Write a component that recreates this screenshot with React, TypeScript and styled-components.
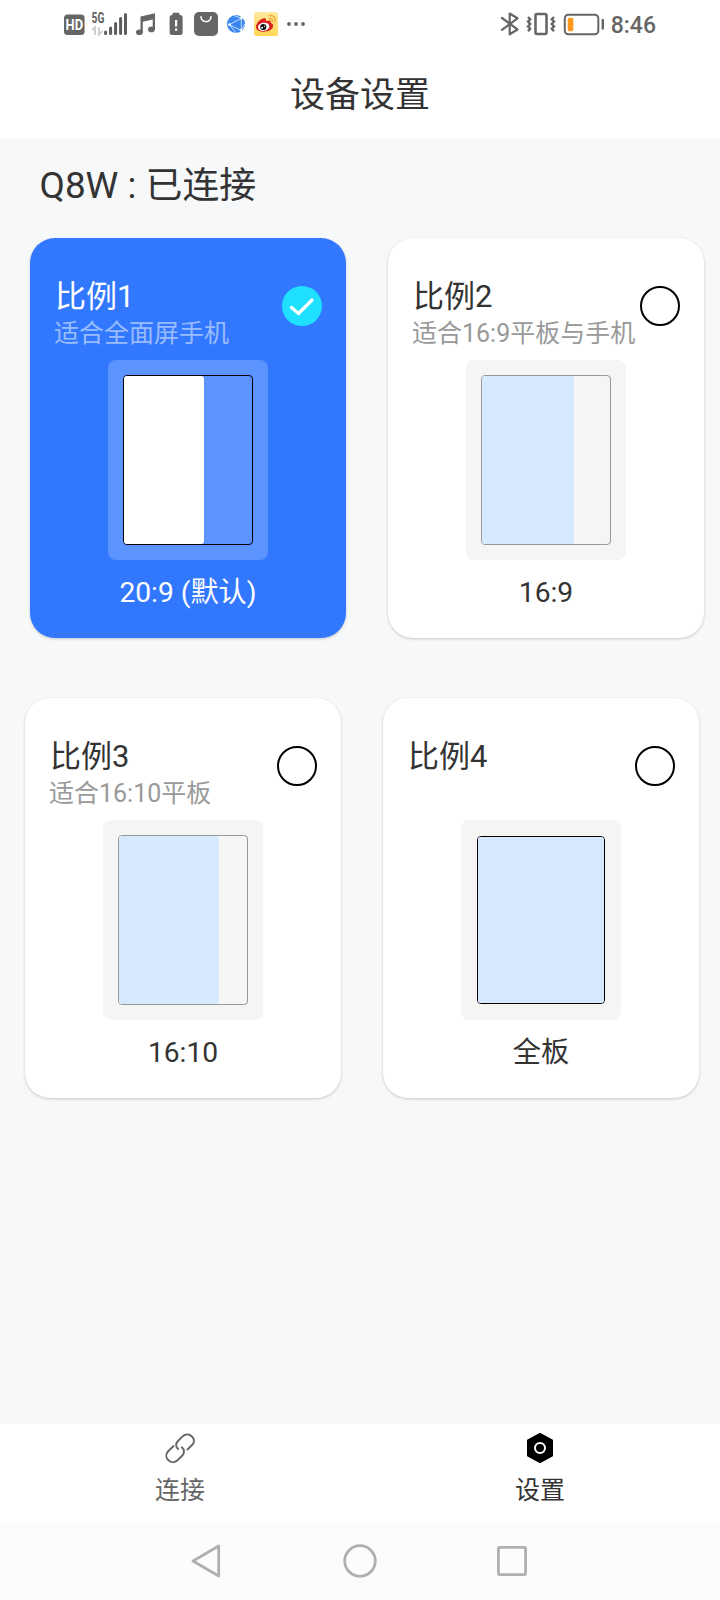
import React from "react";
import styled, { createGlobalStyle } from "styled-components";

const GlobalStyle = createGlobalStyle`
  * { box-sizing: border-box; }
  body {
    margin: 0;
    background: #f6f8fa;
    color: #333;
    font-family: Roboto, "Noto Sans CJK SC", sans-serif;
  }
`;

const Screen = styled.div`
  width: 720px;
  height: 1600px;
  display: flex;
  flex-direction: column;
  background: #f6f8fa;
`;

const StatusBar = styled.div`
  height: 48px;
  flex: none;
  display: flex;
  justify-content: space-between;
  padding: 0 64px 0 60px;
  background: #fff;
`;

const StatusGroup = styled.div`
  display: flex;
  align-items: center;
  height: 48px;
`;

const Clock = styled.span`
  font-size: 23px;
  font-weight: 500;
  line-height: 48px;
  padding-top: 4px;
  color: #666;
`;

const Header = styled.header`
  height: 90px;
  flex: none;
  background: #fff;
  text-align: center;
  font-size: 35px;
  line-height: 96px;
`;

const Content = styled.main`
  flex: 1;
`;

const DeviceState = styled.div`
  height: 100px;
  padding-left: 39.5px;
  font-size: 36.9px;
  line-height: 95px;
`;

const CardRow = styled.div<{ $indent: number }>`
  display: flex;
  gap: 42px;
  padding-left: ${(p) => p.$indent}px;
  margin-bottom: 60px;
`;

const Card = styled.section<{ $active: boolean }>`
  width: 316px;
  height: 400px;
  flex: none;
  display: flex;
  flex-direction: column;
  align-items: center;
  border-radius: 25px;
  padding: 40px 24px 0;
  background: ${(p) => (p.$active ? "#3278ff" : "#fff")};
  color: ${(p) => (p.$active ? "#fff" : "#333")};
  box-shadow: 0 1px 3px rgba(0, 0, 0, 0.2);
`;

const CardHead = styled.div`
  width: 100%;
  height: 82px;
  display: flex;
  justify-content: space-between;
  white-space: nowrap;
`;

const Labels = styled.div`
  width: 228px;
`;

const Title = styled.div`
  font-size: 31px;
  line-height: 38px;
  padding: 0 0 2px 1px;
`;

const Hint = styled.div<{ $active: boolean }>`
  font-size: 25px;
  line-height: 31px;
  color: ${(p) => (p.$active ? "#99bcff" : "#999")};
`;

const Radio = styled.div<{ $active: boolean }>`
  width: 40px;
  height: 40px;
  flex: none;
  margin-top: 8px;
  border-radius: 50%;
  border: ${(p) => (p.$active ? "none" : "2px solid #000")};
  background: ${(p) => (p.$active ? "#1fe0ff" : "transparent")};
`;

const Preview = styled.div<{ $active: boolean }>`
  width: 160px;
  height: 200px;
  flex: none;
  display: flex;
  align-items: center;
  justify-content: center;
  border-radius: 8px;
  background: ${(p) => (p.$active ? "#5b93ff" : "#f5f5f5")};
`;

const Board = styled.div<{ $full: boolean; $line: string }>`
  width: ${(p) => (p.$full ? 128 : 130)}px;
  height: ${(p) => (p.$full ? 168 : 170)}px;
  border: 1px solid ${(p) => p.$line};
  border-radius: 4px;
`;

const Area = styled.div<{ $w: number; $active: boolean }>`
  width: ${(p) => p.$w}px;
  height: 100%;
  border-radius: 3px;
  background: ${(p) => (p.$active ? "#fff" : "#d7e9ff")};
`;

const Caption = styled.div`
  font-size: 28.2px;
  line-height: 36px;
  margin-top: 15px;
`;

const TabBar = styled.nav`
  height: 98px;
  flex: none;
  display: flex;
  background: #fff;
`;

const Tab = styled.div<{ $color: string }>`
  flex: 1;
  display: flex;
  flex-direction: column;
  align-items: center;
  padding-top: 8px;
  font-size: 25px;
  line-height: 32px;
  color: ${(p) => p.$color};

  svg {
    margin-bottom: 11px;
  }
`;

const SystemNav = styled.div`
  height: 78px;
  flex: none;
  background: #fcfcfc;
  svg {
    display: block;
  }
`;

interface Ratio {
  title: string;
  hint: string;
  caption: string;
  area: number;
  line: string;
  active?: boolean;
  full?: boolean;
}

const rows: { indent: number; items: Ratio[] }[] = [
  {
    indent: 30,
    items: [
      { title: "比例1", hint: "适合全面屏手机", caption: "20:9 (默认)", area: 80, line: "#000", active: true },
      { title: "比例2", hint: "适合16:9平板与手机", caption: "16:9", area: 92, line: "#999" },
    ],
  },
  {
    indent: 25,
    items: [
      { title: "比例3", hint: "适合16:10平板", caption: "16:10", area: 100, line: "#999" },
      { title: "比例4", hint: "", caption: "全板", area: 126, line: "#000", full: true },
    ],
  },
];

function RatioCard({ title, hint, caption, area, line, active = false, full = false }: Ratio) {
  return (
    <Card $active={active}>
      <CardHead>
        <Labels>
          <Title>{title}</Title>
          <Hint $active={active}>{hint}</Hint>
        </Labels>
        <Radio $active={active}>
          {active && (
            <svg width="40" height="40" viewBox="0 0 40 40" fill="none" stroke="#fff" strokeWidth="3.2" strokeLinecap="round" strokeLinejoin="round">
              <path d="M9.500 21.500L16.500 27.500L30 14" />
            </svg>
          )}
        </Radio>
      </CardHead>
      <Preview $active={active}>
        <Board $full={full} $line={line}>
          <Area $w={area} $active={active} />
        </Board>
      </Preview>
      <Caption>{caption}</Caption>
    </Card>
  );
}

function StatusLeft() {
  return (
    <svg width="250" height="48" viewBox="60 0 250 48" fontFamily="Roboto, sans-serif">
      {/* HD voice */}
      <rect x="64" y="14.5" width="20.6" height="20.6" rx="3.5" fill="#666" />
      <text x="65.6" y="30" fontSize="14" fontWeight="700" fill="#fff" textLength="17.500" lengthAdjust="spacingAndGlyphs">HD</text>
      {/* 5G signal */}
      <text x="91.6" y="22.8" fontSize="14" fontWeight="700" fill="#5c5c5c" textLength="12.800" lengthAdjust="spacingAndGlyphs">5G</text>
      <path d="M92 30l3.2-2.7V35M99 27.3v7.4l3.5-3.5" fill="none" stroke="#ccc" strokeWidth="1.8" />
      <g stroke="#5c5c5c" strokeWidth="3" strokeLinecap="round">
        <path d="M105.6 32v1.5M110.6 28v5.5M115.6 23.5v10M120.6 18.5v15M125.5 14.5v19" />
      </g>
      {/* music */}
      <g fill="#666">
        <ellipse cx="139.4" cy="32.2" rx="3.4" ry="2.8" />
        <ellipse cx="151.4" cy="29.4" rx="3.4" ry="2.8" />
        <path d="M140.5 16.5L155 13.2V29.5H152.7V19.5L142.8 21.8V32.5H140.5Z" />
      </g>
      {/* battery warning */}
      <rect x="172.5" y="12.7" width="7" height="3" rx="1" fill="#666" />
      <rect x="169.6" y="15" width="13" height="20" rx="2.5" fill="#666" />
      <path d="M176.1 20v6.5M176.1 28.4v2.4" stroke="#fff" strokeWidth="2.2" />
      {/* shopping bag */}
      <rect x="194" y="12" width="24" height="24" rx="5" fill="#666" />
      <path d="M201 16.8c.3 6.5 9.7 6.5 10 0" fill="none" stroke="#fff" strokeWidth="1.6" strokeLinecap="round" />
      {/* browser */}
      <circle cx="236" cy="24" r="9" fill="#3b86ee" />
      <path d="M229.300 24.700L241.300 18.300V30.500ZM229.300 24.700L236 33M241.300 18.300L234 15.500M241.300 30.500L244.800 24" fill="none" stroke="#cfe3ff" strokeWidth=".9" />
      <g fill="#fff">
        <circle cx="229.5" cy="24.6" r="1.3" />
        <circle cx="241.3" cy="18.3" r="1.2" />
        <circle cx="241" cy="30.3" r="1.2" />
      </g>
      {/* weibo */}
      <defs>
        <linearGradient id="weibo" x1="0" y1="0" x2="0" y2="1">
          <stop offset="0" stopColor="#ffe9a0" />
          <stop offset="1" stopColor="#ffd552" />
        </linearGradient>
      </defs>
      <rect x="254" y="12" width="24" height="24" rx="2.500" fill="url(#weibo)" />
      <path d="M256 27c0-4 5-8.800 8.400-8.700 1.700.1 1.900 1.500 1.500 2.900 2.600-1.300 5.500-1.100 4.900 1.800 2 .7 2.600 1.600 2.200 3.600-.7 3.200-4.800 5.200-9 5.200-4.300 0-8-1.700-8-4.800Z" fill="#dc2020" />
      <ellipse cx="263.7" cy="26.8" rx="5.7" ry="4.1" fill="#fff" transform="rotate(-8 263.7 26.8)" />
      <circle cx="263.3" cy="27" r="3.1" fill="#111" />
      <circle cx="262.2" cy="27.8" r="1" fill="#fff" />
      <circle cx="264.5" cy="26.2" r=".6" fill="#fff" />
      <path d="M269.500 18.800c2-.4 3.200.9 2.700 2.700M269.300 15.700c4-.8 6.800 2.300 5.800 5.900" fill="none" stroke="#f0a83c" strokeWidth="1.500" strokeLinecap="round" />
      {/* more */}
      <g fill="#666">
        <circle cx="289" cy="24" r="1.900" />
        <circle cx="296" cy="24" r="1.900" />
        <circle cx="303" cy="24" r="1.900" />
      </g>
    </svg>
  );
}

function StatusRight() {
  return (
    <svg width="122" height="48" viewBox="489 0 122 48" fill="none" stroke="#666" strokeWidth="2">
      {/* bluetooth */}
      <path d="M502 18L517.500 29.500L509.700 34.300V13.500L517.500 18.300L502 29.800" strokeLinejoin="round" strokeLinecap="round" strokeWidth="2.200" />
      {/* vibrate */}
      <rect x="535.5" y="14" width="11" height="20" rx="1.5" strokeWidth="2.6" />
      <path d="M528 17l2.200 2.200-2.200 2.400 2.200 2.400-2.200 2.400 2.200 2.400-2.200 2.400M554 17l-2.200 2.200 2.200 2.400-2.200 2.400 2.200 2.400-2.200 2.400 2.200 2.400" strokeWidth="2.400" />
      {/* battery */}
      <rect x="564.8" y="14.8" width="33.5" height="19.4" rx="3.5" strokeWidth="2" />
      <rect x="567.7" y="17.7" width="5.6" height="13.6" rx="1.6" fill="#ff9a1f" stroke="none" />
      <path d="M602.800 20v8.500" strokeWidth="2.400" strokeLinecap="round" />
    </svg>
  );
}

export default function App() {
  return (
    <>
      <GlobalStyle />
      <Screen>
        <StatusBar>
          <StatusGroup>
            <StatusLeft />
          </StatusGroup>
          <StatusGroup>
            <StatusRight />
            <Clock>8:46</Clock>
          </StatusGroup>
        </StatusBar>
        <Header>设备设置</Header>
        <Content>
          <DeviceState>Q8W : 已连接</DeviceState>
          {rows.map((row) => (
            <CardRow key={row.indent} $indent={row.indent}>
              {row.items.map((item) => (
                <RatioCard key={item.title} {...item} />
              ))}
            </CardRow>
          ))}
        </Content>
        <TabBar>
          <Tab $color="#666">
            <svg width="32" height="32" viewBox="0 0 32 32" fill="none" stroke="#666" strokeWidth="1.9" strokeLinecap="round">
              <path d="M14.200 17C11.600 15 11.600 11.500 13.500 9.500L18.800 4.200C24.500-1.200 33.500 7 28.500 12.500L23.500 17.500" />
              <path d="M9.500 14L4 19.500C-1.500 25.500 7.500 34 13.500 28.300L18.300 23.500C20.700 21 20.500 17.500 17.800 15.300" />
            </svg>
            连接
          </Tab>
          <Tab $color="#333">
            <svg width="32" height="32" viewBox="0 0 32 32">
              <path d="M16 2L28 8.500V23.500L16 30L4 23.500V8.500Z" fill="#000" stroke="#000" strokeWidth="2" strokeLinejoin="round" />
              <circle cx="16" cy="16" r="5" fill="none" stroke="#fff" strokeWidth="2" />
            </svg>
            设置
          </Tab>
        </TabBar>
        <SystemNav>
          <svg width="720" height="78" viewBox="0 0 720 78" fill="none" stroke="#b0b0b0" strokeWidth="2.8" strokeLinejoin="round">
            <path d="M193 39L218.700 24V54Z" />
            <circle cx="360" cy="39" r="15.3" />
            <rect x="498.4" y="25.4" width="27.2" height="27.2" rx="1" />
          </svg>
        </SystemNav>
      </Screen>
    </>
  );
}
